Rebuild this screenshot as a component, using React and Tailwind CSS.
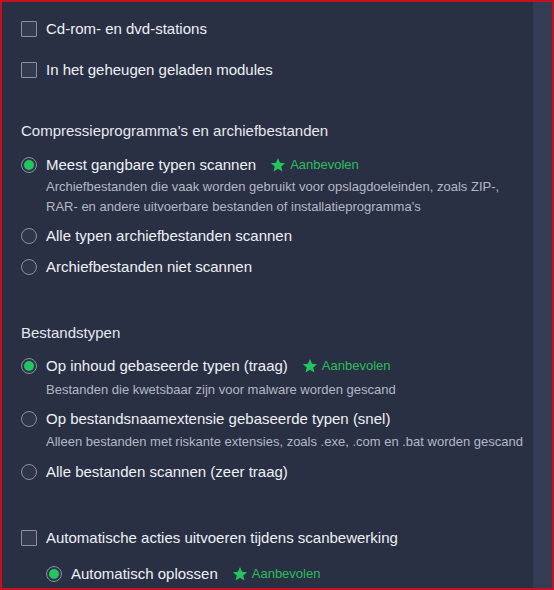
import React from 'react'

const Star = () => (
  <svg viewBox="0 0 24 24" className="h-[16px] w-[16px]" fill="#22c55e">
    <path d="M12 1.5l3.1 7 7.5.7-5.7 5 1.7 7.5L12 17.8l-6.6 3.9 1.7-7.5-5.7-5 7.5-.7z" />
  </svg>
)

function Recommended() {
  return (
    <span className="ml-[14px] inline-flex items-center gap-[4px] text-[13px] text-[#2dbd5c]">
      <Star />
      Aanbevolen
    </span>
  )
}

function Checkbox({ label, className = '' }) {
  return (
    <div className={`flex h-[24px] items-center ${className}`}>
      <span className="h-[16px] w-[16px] rounded-[1px] border border-[#8b90a1] bg-[#343b50]" />
      <span className="ml-[9px] text-[15px] text-[#eef0f5]">{label}</span>
    </div>
  )
}

function Radio({ label, checked, recommended, className = '' }) {
  return (
    <div className={`flex h-[24px] items-center ${className}`}>
      <span className="flex h-[16px] w-[16px] items-center justify-center rounded-full border border-[#8b90a1] bg-[#2f364b]">
        {checked && <span className="h-[10px] w-[10px] rounded-full bg-[#22c55e]" />}
      </span>
      <span className="ml-[9px] text-[15px] text-[#eef0f5]">{label}</span>
      {recommended && <Recommended />}
    </div>
  )
}

function Desc({ children, className = '' }) {
  return (
    <p className={`whitespace-nowrap pl-[25px] text-[13px] leading-[20px] text-[#b4b8c5] ${className}`}>{children}</p>
  )
}

function Heading({ children, className = '' }) {
  return (
    <h2 className={`flex h-[24px] items-center text-[15px] font-normal text-[#e6e8ee] ${className}`}>{children}</h2>
  )
}

export default function App() {
  return (
    <div
      className="flex h-[590px] w-[554px] overflow-hidden border-2 border-[#c3111f] bg-[#293044]"
      style={{ fontFamily: '"Liberation Sans", Arial, sans-serif' }}
    >
      <div className="flex-1 pl-[19px] pt-[15px]">
        <Checkbox label="Cd-rom- en dvd-stations" />
        <Checkbox label="In het geheugen geladen modules" className="mt-[17px]" />

        <Heading className="mt-[37px]">Compressieprogramma's en archiefbestanden</Heading>
        <Radio className="mt-[10px]" checked recommended label="Meest gangbare typen scannen" />
        <Desc>
          Archiefbestanden die vaak worden gebruikt voor opslagdoeleinden, zoals ZIP-,
          <br />
          RAR- en andere uitvoerbare bestanden of installatieprogramma's
        </Desc>
        <Radio className="mt-[7px]" label="Alle typen archiefbestanden scannen" />
        <Radio className="mt-[7px]" label="Archiefbestanden niet scannen" />

        <Heading className="mt-[42px]">Bestandstypen</Heading>
        <Radio className="mt-[9px]" checked recommended label="Op inhoud gebaseerde typen (traag)" />
        <Desc className="mt-[2px]">Bestanden die kwetsbaar zijn voor malware worden gescand</Desc>
        <Radio className="mt-[7px]" label="Op bestandsnaamextensie gebaseerde typen (snel)" />
        <Desc className="mt-[1px]">Alleen bestanden met riskante extensies, zoals .exe, .com en .bat worden gescand</Desc>
        <Radio className="mt-[8px]" label="Alle bestanden scannen (zeer traag)" />

        <Checkbox className="mt-[42px]" label="Automatische acties uitvoeren tijdens scanbewerking" />
        <div className="pl-[25px]">
          <Radio className="mt-[12px]" checked recommended label="Automatisch oplossen" />
        </div>
      </div>
      <div className="w-[19px] bg-[#343b55]" />
    </div>
  )
}
